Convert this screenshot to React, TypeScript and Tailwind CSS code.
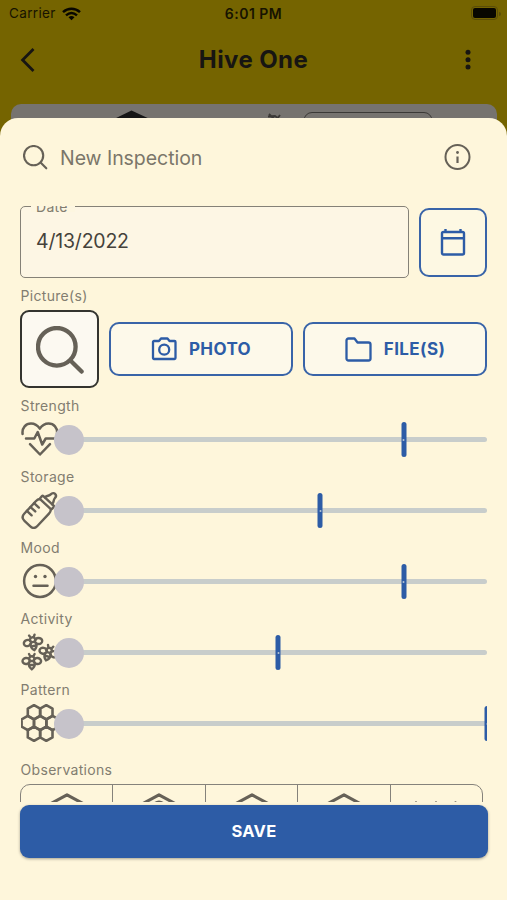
import type { ReactNode } from 'react';

const INK = '#666157';

interface SliderRow {
  label: string;
  value: number;
  icon: ReactNode;
}

function SearchIcon({ className, strokeWidth }: { className: string; strokeWidth: number }) {
  return (
    <svg className={className} viewBox="0 0 24 24" fill="none" stroke={INK} strokeWidth={strokeWidth} strokeLinecap="round">
      <circle cx="10.4" cy="10.4" r="9.4" />
      <path d="M17.2 17.2 22.8 22.8" />
    </svg>
  );
}

function HeartIcon() {
  return (
    <svg className="h-[38px] w-[38px]" viewBox="0 0 38 38" fill="none" stroke={INK} strokeWidth="2.5" strokeLinecap="round" strokeLinejoin="round">
      <path d="M1.600 14C.8 7.500 5 3.500 10 3.500c3.800 0 6.800 2.100 8.800 5.100 2-3 5-5.100 8.800-5.100 5 0 9.200 4 8.400 10.500" />
      <path d="M5 18.500h8.300l3.400-6.500 4.500 12.500 3.500-6h9.300" />
      <path d="M9 24.200 19 34.500 29 24.200" />
    </svg>
  );
}

function BottleIcon() {
  return (
    <svg className="h-[38px] w-[38px]" viewBox="0 0 38 38" fill="none" stroke={INK} strokeWidth="2.4" strokeLinecap="round" strokeLinejoin="round">
      <g transform="rotate(43 19 19)">
        <path d="M11.500 11C10.300 12.500 10 13.500 10 15.500v17c0 3 2 5 5 5h8c3 0 5-2 5-5v-17c0-2-.3-3-1.500-4.500" />
        <path d="M12 6.500h14a1 1 0 0 1 1 1V10a1 1 0 0 1-1 1H12a1 1 0 0 1-1-1V7.500a1 1 0 0 1 1-1z" />
        <path d="M14 6.500c0-3 2.200-3.700 2.200-6.200 0-4.600 5.600-4.600 5.600 0C21.800 2.800 24 3.500 24 6.500" />
        <path d="M10 18h6.500M10 23.300h6.500M10 28.600h6.500" />
      </g>
    </svg>
  );
}

function MoodIcon() {
  return (
    <svg className="h-[38px] w-[38px]" viewBox="0 0 38 38" fill="none" stroke={INK} strokeWidth="2.5" strokeLinecap="round">
      <circle cx="19" cy="19" r="15.900" />
      <circle cx="14.500" cy="14.500" r="1.700" fill={INK} stroke="none" />
      <circle cx="24" cy="14.500" r="1.700" fill={INK} stroke="none" />
      <path d="M12.500 23.700h14" />
    </svg>
  );
}

function Bee({ transform }: { transform: string }) {
  return (
    <g transform={transform}>
      <ellipse cx="-5.600" cy="0" rx="3.700" ry="3" transform="rotate(-8 -5.600 0)" />
      <ellipse cx="5.600" cy="0" rx="3.700" ry="3" transform="rotate(8 5.600 0)" />
      <path d="M-2.900 1.500C-3.400 5-1.800 7 0 8.200c1.800-1.200 3.400-3.200 2.900-6.700" />
      <path d="M-2.800-1.500C-3-5.800 3-5.800 2.800-1.500M-1.700-5-2.800-7M1.700-5 2.800-7M-2.300 4h4.600M-2 0h4" />
    </g>
  );
}

function BeesIcon() {
  return (
    <svg className="h-[38px] w-[38px]" viewBox="0 0 38 38" fill="none" stroke={INK} strokeWidth="2.4" strokeLinecap="round">
      <Bee transform="translate(12 9) rotate(-10)" />
      <Bee transform="translate(27.500 19.500) rotate(18)" />
      <Bee transform="translate(10.800 28)" />
    </svg>
  );
}

const CELLS = [
  [13, 8.2],
  [25.3, 8.2],
  [6.8, 19],
  [19.2, 19],
  [31.6, 19],
  [13, 29.8],
  [25.3, 29.8],
];

function CombIcon() {
  return (
    <svg className="h-[38px] w-[38px]" viewBox="0 0 38 38" fill="none" stroke={INK} strokeWidth="2.6" strokeLinejoin="round">
      {CELLS.map(([x, y]) => (
        <path key={`${x}-${y}`} transform={`translate(${x} ${y})`} d="M0-7.100 6.200-3.600V3.600L0 7.100-6.200 3.600V-3.600z" />
      ))}
    </svg>
  );
}

const SLIDERS: SliderRow[] = [
  { label: 'Strength', value: 80, icon: <HeartIcon /> },
  { label: 'Storage', value: 60, icon: <BottleIcon /> },
  { label: 'Mood', value: 80, icon: <MoodIcon /> },
  { label: 'Activity', value: 50, icon: <BeesIcon /> },
  { label: 'Pattern', value: 100, icon: <CombIcon /> },
];

function Label({ children }: { children: ReactNode }) {
  return <div className="h-[18px] pl-[0.6px] text-[14px] leading-[18px] tracking-[0.3px] text-[#827d70]">{children}</div>;
}

function Slider({ label, value, icon }: SliderRow) {
  return (
    <div className="h-[71px]">
      <Label>{label}</Label>
      <div className="mt-[5px] flex h-[38px] items-center">
        <div className="w-[34px] shrink-0 pl-[0.6px] pt-[0.5px]">{icon}</div>
        <div className="relative h-[38px] flex-1 overflow-hidden">
          <div className="absolute inset-x-0 top-[17px] h-[5px] rounded-full bg-[#c8cdcb]" />
          <div className="absolute left-0 top-[4.5px] h-[30px] w-[30px] rounded-full bg-[#c6c3ca]" />
          <div className="absolute inset-y-0 left-[15.5px] right-0">
            <div
              className="absolute top-[2px] flex h-[35px] w-[5px] -translate-x-1/2 items-center justify-center rounded-full bg-[#2d5ca6]"
              style={{ left: `${value}%` }}
            >
              <span className="h-[2px] w-[2px] rounded-full bg-[#b5c5d5]" />
            </div>
          </div>
        </div>
      </div>
    </div>
  );
}

function StatusBar() {
  return (
    <div className="flex h-[27px] items-center px-[9px] text-[#171300]">
      <div className="flex flex-1 items-center gap-[6px] text-[13.500px] tracking-[0.35px]">
        Carrier
        <svg className="h-[14px] w-[19px]" viewBox="0 0 19 14" fill="none" stroke="#080700" strokeWidth="2.5">
          <path d="M1 5.200c5-4.600 12-4.600 17 0M4 8.400c3.400-3 7.600-3 11 0" />
          <path d="M9.500 13.200 6.500 10.200c2-1.600 4-1.600 6 0z" fill="#080700" stroke="none" />
        </svg>
      </div>
      <div className="text-[14px] font-semibold tracking-[0.5px]">6:01 PM</div>
      <div className="flex flex-1 items-center justify-end gap-px">
        <div className="-mt-px h-[14px] w-[27px] rounded-[4px] border border-[#5a4d08] p-px">
          <div className="h-full rounded-[2px] bg-[#080700]" />
        </div>
        <div className="-mr-[3px] h-[4px] w-[2px] rounded-r bg-[#5a4d08]" />
      </div>
    </div>
  );
}

function HiveCell({ index }: { index: number }) {
  return (
    <div className="flex flex-1 justify-center border-r border-[#85827b] last:border-r-0">
      <svg className="h-[40px] w-[60px]" viewBox="0 0 60 40" fill="none" stroke={INK} strokeWidth="3.1" strokeLinejoin="round">
        {index < 4 && <path d="M8 21.800 30 9.800 52 21.800V40H8z" />}
        {index === 1 && <circle cx="30" cy="23" r="6.500" strokeWidth="2" />}
        {index === 4 && <path d="M10 17.500v12M30 17.500v12M49.500 17.500v12" strokeWidth="2.4" strokeLinecap="round" />}
      </svg>
    </div>
  );
}

export default function App() {
  return (
    <div className="flex h-[900px] w-[507px] flex-col overflow-hidden bg-[#756400] font-['Inter',sans-serif]">
      <StatusBar />

      <div className="flex h-[77px] items-start justify-between pl-[20px] pr-[36px] pt-[20px] text-[#171512]">
        <svg className="h-[26px] w-[16px]" viewBox="0 0 16 26" fill="none" stroke="currentColor" strokeWidth="2.8">
          <path d="M13.500 2 2.600 13 13.500 24" />
        </svg>
        <h1 className="-mt-px ml-[6px] text-[24px] leading-[28px] font-bold tracking-[0.4px]">Hive One</h1>
        <svg className="h-[26px] w-[6px]" viewBox="0 0 6 26" fill="currentColor">
          <circle cx="3" cy="5.300" r="2.500" />
          <circle cx="3" cy="12.700" r="2.500" />
          <circle cx="3" cy="20.100" r="2.500" />
        </svg>
      </div>

      {/* top edge of the card that the sheet covers */}
      <div className="ml-[11px] mr-[10px] h-[36px] shrink-0 rounded-t-[10px] bg-[#76736f]">
        <svg className="h-[36px] w-[485px]" viewBox="0 0 485 36" fill="none">
          <path d="M120.500 6.500 101 16v8h40v-8z" fill="#151515" />
          <path d="M257 12.500 264 12l4 3M258 10l6 6M269 11l-3 4" stroke="#3b3936" strokeWidth="1.8" />
          <rect x="293" y="8.500" width="128" height="40" rx="8" stroke="#3b3936" />
        </svg>
      </div>

      <div className="-mt-[22px] flex flex-1 flex-col rounded-t-[18px] bg-[#fef6db] px-[20px]">
        <div className="flex h-[88px] items-start pt-[26px]">
          <SearchIcon className="ml-[3px] mt-px h-[24.500px] w-[24.500px]" strokeWidth={2.1} />
          <h2 className="ml-[12.500px] mt-[0.5px] flex-1 text-[19.500px] leading-[26px] tracking-[-0.05px] text-[#7b766a]">
            New Inspection
          </h2>
          <svg className="mr-[16px] h-[27px] w-[27px]" viewBox="0 0 27 27" fill="none" stroke={INK} strokeWidth="2">
            <circle cx="13.500" cy="13" r="12" />
            <path d="M13.500 12.500v6.500" strokeWidth="2.2" />
            <circle cx="13.500" cy="8.500" r="1.400" fill={INK} stroke="none" />
          </svg>
        </div>

        <div className="h-[596px] overflow-hidden">
          <div className="flex items-center gap-[10px]">
            <div className="relative flex h-[72px] w-[389px] shrink-0 items-center rounded-[5px] border border-[#858177] bg-[#fdf6e4] pl-[15px] text-[19.500px] tracking-[-0.2px] text-[#45423b]">
              <span className="absolute -top-[9px] left-[10px] h-[14px] w-[44px] bg-[#fdf6e0] pl-[5px] text-[14px] leading-[18px] tracking-[0.3px] text-[#827d70]">
                Date
              </span>
              <span className="-mt-px">4/13/2022</span>
            </div>
            <button className="flex h-[69px] w-[68px] items-center justify-center rounded-[10px] border-2 border-[#3964a8] bg-[#fdf8e3]">
              <svg className="h-[28px] w-[26px]" viewBox="0 0 26 28" fill="none" stroke="#2d5ca6" strokeWidth="2.4" strokeLinejoin="round">
                <rect x="2" y="4" width="22" height="22.500" rx="1.500" />
                <path d="M2 10.300h22M5.500 1v3M20.500 1v3" />
              </svg>
            </button>
          </div>

          <div className="mt-[9px]">
            <Label>Picture(s)</Label>
          </div>
          <div className="mt-[5px] flex h-[78px] items-center gap-[10px]">
            <div className="flex h-[78px] w-[79px] items-center justify-center rounded-[9px] border-2 border-[#34342f] bg-[#fcf9f1] pt-[2px]">
              <SearchIcon className="h-[48px] w-[48px]" strokeWidth={2.15} />
            </div>
            <button className="flex h-[54px] flex-1 items-center justify-center gap-[12px] rounded-[10px] border-2 border-[#3964a8] bg-[#fdf9ea] text-[17px] font-bold tracking-[0.4px] text-[#2d5ca6]">
              <svg className="h-[24px] w-[26px]" viewBox="0 0 25 24" fill="none" stroke="#2d5ca6" strokeWidth="2.3" strokeLinejoin="round">
                <path d="M1.500 5a1 1 0 0 1 1-1h5L9.500 1.500h6.500l2 2.500h5a1 1 0 0 1 1 1v16a1 1 0 0 1-1 1h-20.500a1 1 0 0 1-1-1z" />
                <circle cx="12.700" cy="12.700" r="5" />
              </svg>
              <span className="pt-px">PHOTO</span>
            </button>
            <button className="flex h-[54px] flex-1 items-center justify-center gap-[12px] rounded-[10px] border-2 border-[#3964a8] bg-[#fdf9ea] text-[17px] font-bold tracking-[0.4px] text-[#2d5ca6]">
              <svg className="h-[25px] w-[27px]" viewBox="0 0 27 25" fill="none" stroke="#2d5ca6" strokeWidth="2.3" strokeLinejoin="round">
                <path d="M1.500 3.500a2 2 0 0 1 2-2h6l3 4h11a2 2 0 0 1 2 2v14a2 2 0 0 1-2 2h-20a2 2 0 0 1-2-2z" />
              </svg>
              <span className="pt-px">FILE(S)</span>
            </button>
          </div>

          <div className="mt-[9px]">
            {SLIDERS.map((row) => (
              <Slider key={row.label} {...row} />
            ))}
          </div>

          <div className="mt-[9px]">
            <Label>Observations</Label>
          </div>
          <div className="mt-[5px] flex h-[60px] w-[463px] overflow-hidden rounded-[10px] border border-[#85827b]">
            {[0, 1, 2, 3, 4].map((i) => (
              <HiveCell key={i} index={i} />
            ))}
          </div>
        </div>

        <button className="mt-[3px] h-[53px] w-[468px] rounded-[9px] bg-[#2d5ca6] text-[16.500px] font-bold tracking-[0.3px] text-white shadow-[0_1px_3px_rgba(0,0,0,0.35)]">
          SAVE
        </button>
      </div>
    </div>
  );
}
